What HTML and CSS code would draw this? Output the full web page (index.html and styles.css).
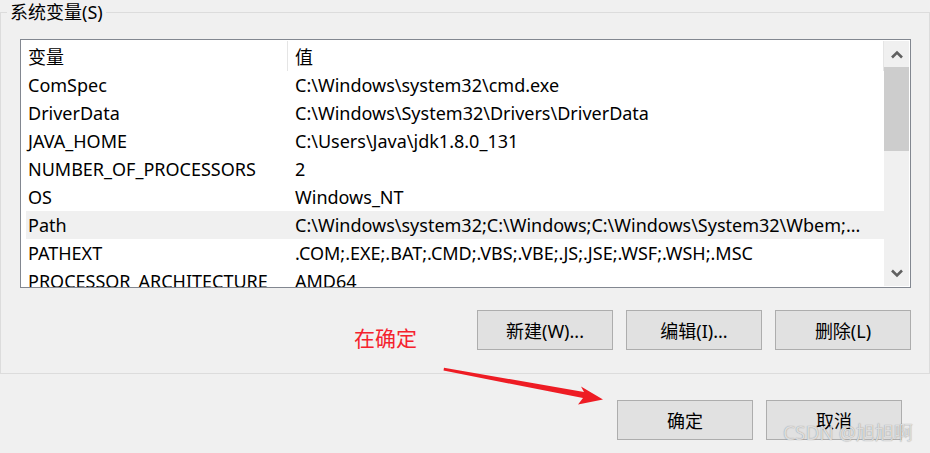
FILE: index.html
```html
<!DOCTYPE html>
<html lang="zh-CN">
<head>
<meta charset="utf-8">
<title>系统变量</title>
<link rel="stylesheet" href="styles.css">
</head>
<body>
<div class="dialog">
  <fieldset class="group">
    <legend class="group-title">系统变量(S)</legend>
    <div class="listbox">
      <div class="list">
        <div class="row head">
          <div class="cell c1">变量</div>
          <div class="cell c2">值</div>
        </div>
        <div class="row"><div class="cell c1">ComSpec</div><div class="cell c2">C:\Windows\system32\cmd.exe</div></div>
        <div class="row"><div class="cell c1">DriverData</div><div class="cell c2">C:\Windows\System32\Drivers\DriverData</div></div>
        <div class="row"><div class="cell c1">JAVA_HOME</div><div class="cell c2">C:\Users\Java\jdk1.8.0_131</div></div>
        <div class="row"><div class="cell c1">NUMBER_OF_PROCESSORS</div><div class="cell c2">2</div></div>
        <div class="row"><div class="cell c1">OS</div><div class="cell c2">Windows_NT</div></div>
        <div class="row selected"><div class="cell c1">Path</div><div class="cell c2">C:\Windows\system32;C:\Windows;C:\Windows\System32\Wbem;...</div></div>
        <div class="row"><div class="cell c1">PATHEXT</div><div class="cell c2">.COM;.EXE;.BAT;.CMD;.VBS;.VBE;.JS;.JSE;.WSF;.WSH;.MSC</div></div>
        <div class="row"><div class="cell c1">PROCESSOR_ARCHITECTURE</div><div class="cell c2">AMD64</div></div>
      </div>
      <div class="scrollbar">
        <div class="sb-btn">
          <svg width="12" height="9" viewBox="0 0 12 9"><polyline points="1,7.5 6,2.5 11,7.5" fill="none" stroke="#606060" stroke-width="2.6"/></svg>
        </div>
        <div class="sb-thumb"></div>
        <div class="sb-track"></div>
        <div class="sb-btn">
          <svg width="12" height="9" viewBox="0 0 12 9"><polyline points="1,1.5 6,6.5 11,1.5" fill="none" stroke="#606060" stroke-width="2.6"/></svg>
        </div>
      </div>
    </div>
    <div class="btn-row">
      <button class="btn">新建(W)...</button>
      <button class="btn">编辑(I)...</button>
      <button class="btn">删除(L)</button>
    </div>
  </fieldset>
  <div class="btn-row bottom">
    <button class="btn">确定</button>
    <button class="btn">取消</button>
  </div>

  <div class="note">在确定</div>
  <svg class="arrow" width="930" height="453" viewBox="0 0 930 453">
    <polygon points="444,367.8 584,392 581,386.5 603,399.5 578,404.5 583,398 443.5,370.6" fill="#ee1c24"/>
  </svg>
  <div class="watermark">CSDN @旭旭啊</div>
</div>
</body>
</html>
```
FILE: styles.css
```css
* { box-sizing: border-box; }
html, body {
  margin: 0;
  padding: 0;
  background: #f0f0f0;
}
body {
  width: 930px;
  height: 453px;
  overflow: hidden;
  font-family: "Noto Sans", "Noto Sans CJK SC", sans-serif;
  font-size: 18px;
  color: #000;
}
.dialog {
  position: relative;
  width: 930px;
  height: 453px;
}
.group {
  margin: 0;
  width: 930px;
  height: 374px;
  border: 1px solid #dcdcdc;
  padding: 15px 18px 0 6px;
  min-width: 0;
}
.group-title {
  padding: 0 3px;
  font-size: 18px;
  line-height: 24px;
  height: 24px;
  color: #000;
}
.listbox {
  margin-left: 13px;
  width: 891px;
  height: 249px;
  border: 1px solid #828790;
  background: #fff;
  display: flex;
}
.list {
  flex: 1;
  overflow: hidden;
}
.row {
  display: flex;
  height: 28px;
  align-items: center;
  white-space: nowrap;
}
.row.head {
  height: 31px;
  align-items: stretch;
}
.row.head .cell {
  display: flex;
  align-items: center;
  margin-top: 1px;
}
.row.head .c1 { border-right: 1px solid #e5e5e5; }
.row.head .c2 { border-right: 1px solid #e5e5e5; }
.cell {
  padding-left: 7px;
  overflow: hidden;
}
.c1 { width: 267px; flex: none; }
.c2 { flex: 1; }
.row.selected { background: #f0f0f0; margin-left: 5px; }
.row.selected .c1 { width: 262px; padding-left: 2px; }
.scrollbar {
  width: 25px;
  margin: 1px 1px 1px 0;
  background: #f0f0f0;
  display: flex;
  flex-direction: column;
}
.sb-btn {
  height: 26px;
  display: flex;
  align-items: center;
  justify-content: center;
  flex: none;
}
.sb-thumb {
  height: 84px;
  background: #cdcdcd;
  flex: none;
}
.sb-track { flex: 1; }
.btn-row {
  display: flex;
  justify-content: flex-end;
  gap: 13px;
  margin-top: 22px;
}
.btn {
  width: 136px;
  height: 40px;
  background: #e1e1e1;
  border: 1px solid #adadad;
  font-family: "Noto Sans", "Noto Sans CJK SC", sans-serif;
  font-size: 18px;
  color: #000;
  padding: 0;
}
.btn-row.bottom {
  margin-top: 26px;
  padding-right: 28px;
}
.note {
  position: absolute;
  left: 354px;
  top: 322px;
  font-family: "Noto Sans CJK SC", sans-serif;
  font-size: 21px;
  line-height: 30px;
  color: #f5222d;
}
.arrow {
  position: absolute;
  left: 0;
  top: 0;
  pointer-events: none;
}
.watermark {
  position: absolute;
  left: 783px;
  top: 420px;
  font-family: "Noto Sans", "Noto Sans CJK SC", sans-serif;
  font-size: 19px;
  line-height: 26px;
  color: rgba(235,235,235,0.85);
  text-shadow: 0 0 1px rgba(110,110,110,0.8);
  white-space: nowrap;
}
```
